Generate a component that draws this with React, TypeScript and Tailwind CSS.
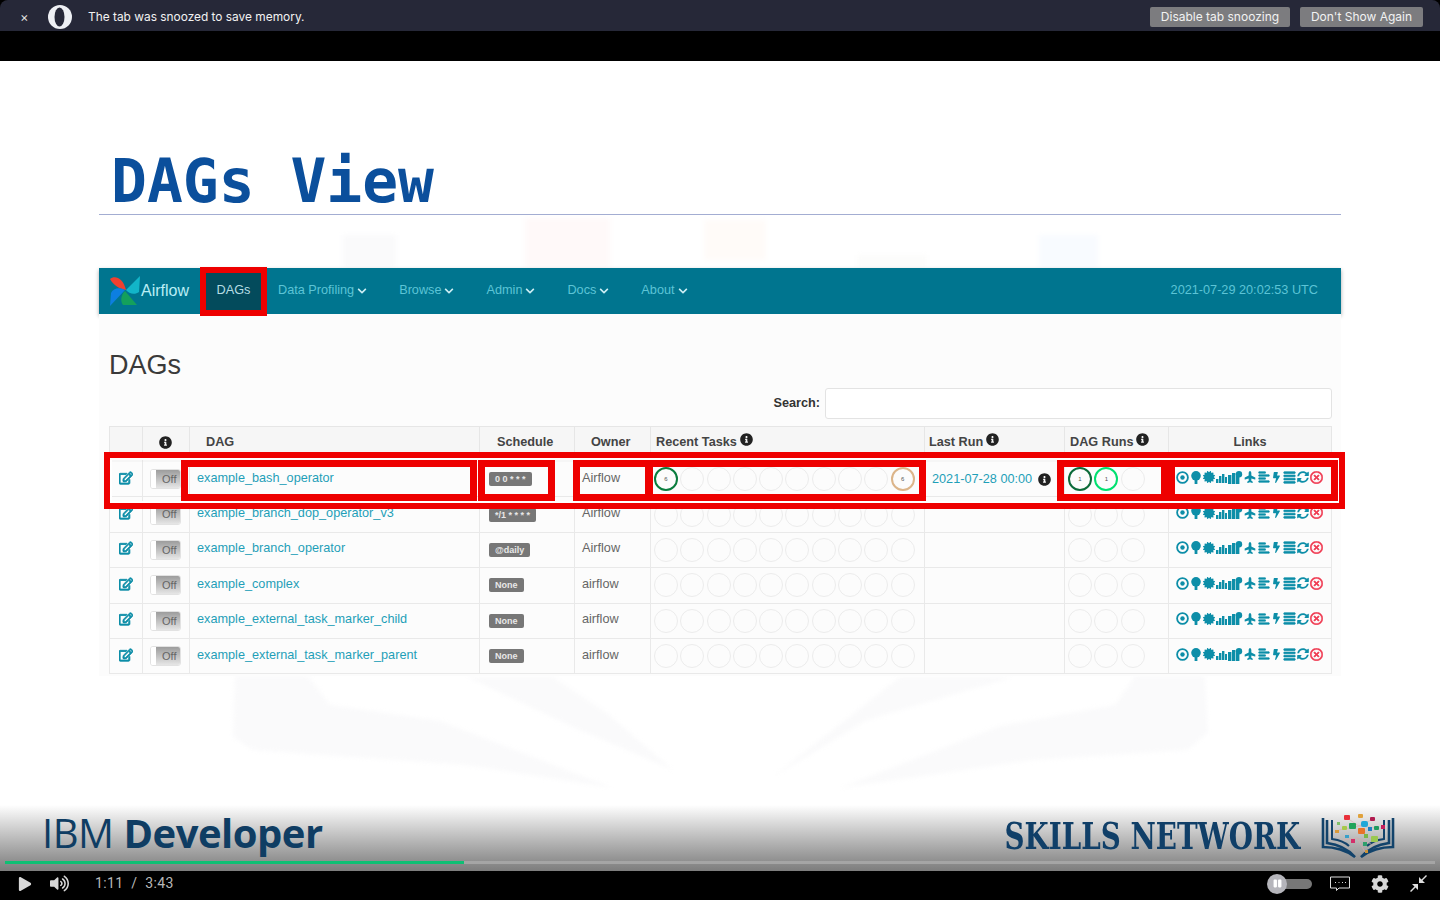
import {
  FaAlignJustify,
  FaAlignLeft,
  FaBolt,
  FaCertificate,
  FaChevronDown,
  FaCog,
  FaInfoCircle,
  FaPause,
  FaPlane,
  FaPlay,
  FaRegEdit,
  FaRegTimesCircle,
  FaSyncAlt,
  FaVolumeUp,
} from "react-icons/fa";

const rows = [
  { name: "example_bash_operator", schedule: "0 0 * * *", owner: "Airflow" },
  { name: "example_branch_dop_operator_v3", schedule: "*/1 * * * *", owner: "Airflow" },
  { name: "example_branch_operator", schedule: "@daily", owner: "Airflow" },
  { name: "example_complex", schedule: "None", owner: "airflow" },
  { name: "example_external_task_marker_child", schedule: "None", owner: "airflow" },
  { name: "example_external_task_marker_parent", schedule: "None", owner: "airflow" },
];

const navItems = ["Data Profiling", "Browse", "Admin", "Docs", "About"];
const gridCols = "grid grid-cols-[34px_47px_290px_95px_76px_274px_140px_104px_163px]";

const Circle = ({ tone, label }: { tone?: string; label?: string }) => (
  <span
    className={`flex h-[24px] w-[24px] shrink-0 items-center justify-center rounded-full text-[6px] text-[#555] ${
      tone ?? "border-[1.5px] border-[#ececec]"
    }`}
  >
    {label}
  </span>
);

const PlayRing = () => (
  <svg width="13" height="13" viewBox="0 0 13 13" fill="none">
    <circle cx="6.5" cy="6.5" r="5.4" stroke="currentColor" strokeWidth="1.8" />
    <circle cx="6.5" cy="6.5" r="2.2" fill="currentColor" />
  </svg>
);

const TreeIcon = () => (
  <svg width="12" height="13" viewBox="0 0 12 13" fill="currentColor">
    <circle cx="6" cy="4.8" r="4.8" />
    <rect x="4.6" y="7" width="2.8" height="6" />
  </svg>
);

const StatsIcon = () => (
  <svg width="11" height="12" viewBox="0 0 11 12" fill="currentColor">
    <rect x="0" y="8" width="2.4" height="4" />
    <rect x="3" y="5" width="2.4" height="7" />
    <rect x="6" y="3" width="2.4" height="9" />
    <rect x="9" y="6" width="2" height="6" />
  </svg>
);

const BarsCloudIcon = () => (
  <svg width="15" height="13" viewBox="0 0 15 13" fill="currentColor">
    <rect x="0" y="4" width="3.4" height="9" />
    <rect x="4" y="2" width="3.4" height="11" />
    <rect x="8" y="5" width="3.4" height="8" />
    <circle cx="11" cy="3.2" r="3.2" />
  </svg>
);

const LinkIcons = () => (
  <div className="flex h-full items-center justify-between pl-[7px] pr-[8px] text-[#0d8ea8]">
    <PlayRing />
    <TreeIcon />
    <FaCertificate size={12} />
    <StatsIcon />
    <BarsCloudIcon />
    <FaPlane size={12} className="-rotate-90" />
    <FaAlignLeft size={12} stroke="currentColor" strokeWidth={30} />
    <FaBolt size={11} />
    <FaAlignJustify size={13} stroke="currentColor" strokeWidth={30} />
    <FaSyncAlt size={12} />
    <FaRegTimesCircle size={13} className="text-[#f0384f]" stroke="currentColor" strokeWidth={20} />
  </div>
);

const Toggle = () => (
  <div className="flex h-[20px] w-[31px] overflow-hidden rounded-[3px] border border-[#e2e2e2] bg-white">
    <span className="w-[5px] bg-white" />
    <span className="flex flex-1 items-center justify-end bg-gradient-to-b from-[#9d9d9d] to-[#e6e6e6] pr-[3px] text-[11px] text-[#666]">
      Off
    </span>
  </div>
);

const AirflowLogo = () => (
  <svg width="32" height="32" viewBox="0 0 32 32">
    <path d="M1 4C6 0 14 3 17 15C11 14 5 11 1 4Z" fill="#f0402f" />
    <path d="M17 15L31 1L30 17C26 20 20 19 17 15Z" fill="#12b5c9" />
    <path d="M16 15L1 31L2 18C4 13 11 12 16 15Z" fill="#0d7fe0" />
    <path d="M16 16L28 30L14 30C11 26 12 20 16 16Z" fill="#14a05c" />
  </svg>
);

const OperaLogo = () => (
  <svg width="26" height="26" viewBox="0 0 26 26">
    <ellipse cx="13" cy="13" rx="12" ry="12" fill="#eef0f4" />
    <ellipse cx="12.5" cy="13" rx="5" ry="9.5" fill="#262838" />
  </svg>
);

const BookLogo = () => (
  <svg width="74" height="44" viewBox="0 0 74 44" fill="none">
    <path d="M2 4V33C14 33 26 37 34 43C26 34 14 30 6 29V6" stroke="#12436b" strokeWidth="2.6" />
    <path d="M72 4V33C60 33 48 37 40 43C48 34 60 30 68 29V6" stroke="#12436b" strokeWidth="2.6" />
    <path d="M11 6V25C18 26 24 28 28 32M63 6V25C56 26 50 28 46 32" stroke="#12436b" strokeWidth="2" />
    <path d="M26 4L38 12L50 6M18 16L38 12L56 14M22 26L36 24L50 30M36 24L44 38" stroke="#d9a9a9" strokeWidth="0.6" />
    <rect x="23" y="1" width="6" height="5" rx="1" fill="#e8303a" />
    <rect x="37" y="0" width="5" height="4" rx="1" fill="#e0a23c" />
    <rect x="49" y="3" width="5" height="4" rx="1" fill="#b01b4f" />
    <rect x="28" y="9" width="7" height="6" rx="1" fill="#22a45a" />
    <rect x="40" y="7" width="7" height="6" rx="2" fill="#20a7d8" />
    <rect x="16" y="8" width="3" height="3" fill="#7fc06a" />
    <rect x="21" y="12" width="5" height="4" rx="1" fill="#a7c84a" />
    <rect x="14" y="16" width="4" height="3" fill="#d89a3a" />
    <rect x="37" y="14" width="7" height="6" rx="1" fill="#e8742a" />
    <rect x="47" y="13" width="4" height="4" fill="#1c7fc4" />
    <rect x="53" y="12" width="5" height="4" rx="1" fill="#1f9b5f" />
    <rect x="60" y="11" width="4" height="4" fill="#c4205c" />
    <rect x="24" y="21" width="4" height="3" fill="#3aa0c8" />
    <rect x="30" y="25" width="4" height="4" fill="#d32f6a" />
    <rect x="43" y="20" width="4" height="4" fill="#78b84a" />
    <rect x="50" y="22" width="7" height="6" rx="1" fill="#9ac850" />
    <rect x="42" y="28" width="4" height="4" fill="#2f9f6c" />
    <rect x="44" y="36" width="3" height="3" fill="#c9933a" />
  </svg>
);

const Watermark = () => (
  <svg className="absolute inset-0 blur-[2px]" width="1440" height="810" viewBox="0 0 1440 810">
    <rect x="343" y="174" width="53" height="33" fill="#fafafb" />
    <rect x="525" y="157" width="85" height="50" fill="#fff9f9" />
    <rect x="704" y="159" width="62" height="40" fill="#fffbf8" />
    <rect x="857" y="194" width="70" height="13" fill="#fcfcfb" />
    <rect x="1039" y="174" width="59" height="33" fill="#f8fbff" />
    <g fill="#fafafb">
      <path d="M235 615H308L330 644L440 660L613 727L467 704L253 689L233 676Z" />
      <path d="M467 616H553L607 652L673 709L573 666Z" />
      <path d="M1205 615H1135L1115 644L1000 665L840 727L1033 699L1187 689L1208 672Z" />
      <path d="M900 616H1013L867 659L773 716Z" />
    </g>
  </svg>
);

const App = () => {
  return (
    <div className="flex h-[900px] w-[1440px] flex-col overflow-hidden bg-black font-['Liberation_Sans',sans-serif]">
      {/* opera snooze bar */}
      <div className="flex h-[31px] items-center rounded-t-[8px] bg-[#262838] pt-[3px] font-['Inter',sans-serif] text-[12px] text-[#f2f2f2]">
        <span className="ml-[20px] w-[8px] text-[13px] leading-none text-[#ddd]">×</span>
        <span className="ml-[19px] flex"><OperaLogo /></span>
        <span className="ml-[15px] text-[11.9px]">The tab was snoozed to save memory.</span>
        <button className="ml-auto h-[20px] w-[140px] rounded-[2px] bg-[#7c7c7f] text-center text-[12px]">Disable tab snoozing</button>
        <button className="ml-[10px] mr-[17px] h-[20px] w-[123px] rounded-[2px] bg-[#7c7c7f] text-center text-[12px]">Don't Show Again</button>
      </div>
      <div className="h-[30px] bg-black" />

      {/* slide */}
      <div className="relative flex h-[810px] flex-col bg-white">
        <Watermark />
        <div className="relative px-[99px]">
          <h1 className="h-[153px] pl-[12px] pt-[91px] font-['DejaVu_Sans_Mono',monospace] text-[59.6px] font-bold leading-[60px] text-[#0b4f9c]">
            DAGs View
          </h1>
          <div className="h-px bg-[#a3add2]" />

          {/* airflow page */}
          <nav className="mt-[53px] flex h-[46px] items-center bg-[#00758f] text-[12.7px] text-[#5cc4d6] shadow-[0_2px_4px_rgba(0,0,0,0.35)]">
            <span className="ml-[10px] flex"><AirflowLogo /></span>
            <span className="w-[59px] text-[16px] text-[#b9eef5]">Airflow</span>
            <span className="z-10 flex h-[49px] w-[67px] items-center justify-center border-[6px] border-[#ee0000] bg-[#034b5c] text-[#b5dde4]">
              DAGs
            </span>
            <div className="ml-[11px] flex items-center gap-8">
              {navItems.map((item) => (
                <span key={item} className="flex items-center gap-[3px]">
                  {item}
                  <FaChevronDown size={10} className="text-[#cdeef4]" />
                </span>
              ))}
            </div>
            <span className="ml-auto mr-[23px]">2021-07-29 20:02:53 UTC</span>
          </nav>

          <div className="h-[362px] bg-[#fcfcfc] pl-[10px] pr-[9px]">
            <h2 className="pt-[33px] text-[27px] leading-[36px] text-[#3a3a3a]">DAGs</h2>
            <div className="mt-[5px] flex items-center justify-end gap-[5px]">
              <span className="text-[12.7px] font-bold text-[#333]">Search:</span>
              <div className="h-[31px] w-[507px] rounded-[3px] border border-[#e3e3e3] bg-white" />
            </div>

            <div className="relative mt-[7px] border-t border-[#e6e6e6]">
              <div className={`${gridCols} h-[35px] bg-[#f6f6f6] text-[12.7px] font-bold text-[#444]`}>
                <div className="border-x border-[#e6e6e6]" />
                <div className="flex items-center justify-center border-r border-[#e6e6e6] pb-[5px] pr-[2px] text-[#222]">
                  <FaInfoCircle size={13} />
                </div>
                <div className="border-r border-[#e6e6e6] pl-[16px] pt-[6px]">DAG</div>
                <div className="border-r border-[#e6e6e6] pl-[17px] pt-[6px]">Schedule</div>
                <div className="border-r border-[#e6e6e6] pl-[16px] pt-[6px]">Owner</div>
                <div className="flex items-start gap-[3px] border-r border-[#e6e6e6] pl-[5px] pt-[6px]">
                  Recent Tasks <FaInfoCircle size={13} className="text-[#222]" />
                </div>
                <div className="flex items-start gap-[3px] border-r border-[#e6e6e6] pl-[4px] pt-[6px]">
                  Last Run <FaInfoCircle size={13} className="text-[#222]" />
                </div>
                <div className="flex items-start gap-[3px] border-r border-[#e6e6e6] pl-[5px] pt-[6px]">
                  DAG Runs <FaInfoCircle size={13} className="text-[#222]" />
                </div>
                <div className="border-r border-[#e6e6e6] pt-[6px] text-center">Links</div>
              </div>

              {rows.map((row, i) => (
                <div key={row.name} className={`${gridCols} h-[35.4px] border-b border-[#e9e9e9] text-[12.7px]`}>
                  <div className="flex items-center justify-center border-x border-[#e9e9e9] pb-[3px] text-[#0d8ea8]">
                    <FaRegEdit size={14} stroke="currentColor" strokeWidth={35} />
                  </div>
                  <div className="flex items-center justify-center border-r border-[#e9e9e9] pr-[2px]">
                    <Toggle />
                  </div>
                  <div className="flex items-center border-r border-[#e9e9e9] pb-[2px] pl-[7px] text-[#1f9fb8]">{row.name}</div>
                  <div className="flex items-center border-r border-[#e9e9e9] pl-[9px]">
                    <span className="rounded-[2px] bg-[#777] px-[6px] py-[2px] text-[9px] font-bold leading-[10px] text-[#e8e8e8]">
                      {row.schedule}
                    </span>
                  </div>
                  <div className="flex items-center border-r border-[#e9e9e9] pb-[2px] pl-[7px] text-[#666]">{row.owner}</div>
                  <div className="flex items-center gap-[2.3px] border-r border-[#e9e9e9] pl-[3px]">
                    {Array.from({ length: 10 }).map((_, c) => (
                      <Circle
                        key={c}
                        tone={
                          i === 0 && c === 0
                            ? "border-2 border-[#0a7d3e]"
                            : i === 0 && c === 9
                              ? "border-2 border-[#dcb58a]"
                              : undefined
                        }
                        label={i === 0 && (c === 0 || c === 9) ? "6" : undefined}
                      />
                    ))}
                  </div>
                  <div className="flex items-center justify-between border-r border-[#e9e9e9] pl-[7px] pr-[13px] text-[#1f9fb8]">
                    {i === 0 && (
                      <>
                        <span>2021-07-28 00:00</span>
                        <FaInfoCircle size={13} className="text-[#222]" />
                      </>
                    )}
                  </div>
                  <div className="flex items-center gap-[2.3px] border-r border-[#e9e9e9] pl-[3px]">
                    {Array.from({ length: 3 }).map((_, c) => (
                      <Circle
                        key={c}
                        tone={
                          i === 0 && c === 0
                            ? "border-2 border-[#0c6b3a]"
                            : i === 0 && c === 1
                              ? "border-2 border-[#00e070]"
                              : undefined
                        }
                        label={i === 0 && c < 2 ? "1" : undefined}
                      />
                    ))}
                  </div>
                  <div className="border-r border-[#e9e9e9] pb-[4px]">
                    <LinkIcons />
                  </div>
                </div>
              ))}

              {/* red highlight boxes from the slide */}
              <div className="absolute left-[-5px] top-[25px] h-[57px] w-[1241px] border-[6px] border-[#ee0000] shadow-[inset_0_0_0_2px_#fff]" />
              <div className="absolute left-[72px] top-[33px] h-[41px] w-[296px] border-[7px] border-[#ee0000]" />
              <div className="absolute left-[369px] top-[33px] h-[41px] w-[77px] border-[7px] border-[#ee0000]" />
              <div className="absolute left-[464px] top-[33px] h-[41px] w-[79px] border-[7px] border-[#ee0000]" />
              <div className="absolute left-[537px] top-[33px] h-[41px] w-[280px] border-[7px] border-[#ee0000]" />
              <div className="absolute left-[948px] top-[33px] h-[41px] w-[111px] border-[7px] border-[#ee0000]" />
              <div className="absolute left-[1059px] top-[33px] h-[41px] w-[170px] border-[7px] border-[#ee0000]" />
            </div>
          </div>
        </div>

        {/* video footer */}
        <div className="relative mt-auto flex h-[66px] items-start justify-between bg-gradient-to-b from-white to-[#7d7d7d] pl-[42px] pr-[45px]">
          <span className="pt-[1px] font-['Open_Sans',sans-serif] text-[40px] leading-[54px] tracking-[-0.5px] text-[#0f3d63]">
            IBM <span className="font-bold">Developer</span>
          </span>
          <div className="flex items-center gap-[21px] pt-[9px]">
            <div className="flex w-[296px] justify-end whitespace-nowrap">
              <span className="origin-right scale-x-[0.75] font-['DejaVu_Serif',serif] text-[37px] font-bold leading-[44px] text-[#103f68]">
                SKILLS NETWORK
              </span>
            </div>
            <BookLogo />
          </div>
          <div className="absolute bottom-[7px] left-[5px] right-[5px] flex h-[3px] bg-[#a5a5a5]">
            <div className="w-[459px] bg-[#0fbf74]" />
          </div>
        </div>
      </div>

      {/* video controls */}
      <div className="flex h-[29px] items-center bg-black pb-[4px] text-[#d8d8d8]">
        <FaPlay size={14} className="ml-[18px]" />
        <FaVolumeUp size={19} className="ml-[18px]" />
        <span className="ml-[26px] font-['Roboto',sans-serif] text-[14px] tracking-[0.4px] text-[#b8b8b8]">
          1:11 &nbsp;/&nbsp; 3:43
        </span>
        <div className="ml-auto flex h-[20px] w-[45px] items-center rounded-full">
          <span className="z-10 flex h-[20px] w-[20px] items-center justify-center rounded-full bg-[#b5b5bb] text-white">
            <FaPause size={9} />
          </span>
          <span className="-ml-[6px] h-[10px] w-[31px] rounded-r-full bg-[#777]" />
        </div>
        <svg className="ml-[18px]" width="20" height="15" viewBox="0 0 20 15" fill="none">
          <path d="M0.5 1H19.5V12H9L6.5 14.5V12H0.5Z" stroke="#ddd" />
          <path d="M5 6.5H6M8.5 6.5H9.5M12 6.5H13M15 6.5H16" stroke="#ddd" />
        </svg>
        <FaCog size={18} className="ml-[21px]" />
        <svg className="ml-[21px] mr-[13px]" width="17" height="17" viewBox="0 0 17 17" fill="#ddd">
          <path d="M16 0L17 1L12.5 5.5L15 8H9V2L11.5 4.5Z" />
          <path d="M1 17L0 16L4.5 11.5L2 9H8V15L5.5 12.5Z" />
        </svg>
      </div>
    </div>
  );
};

export default App;
